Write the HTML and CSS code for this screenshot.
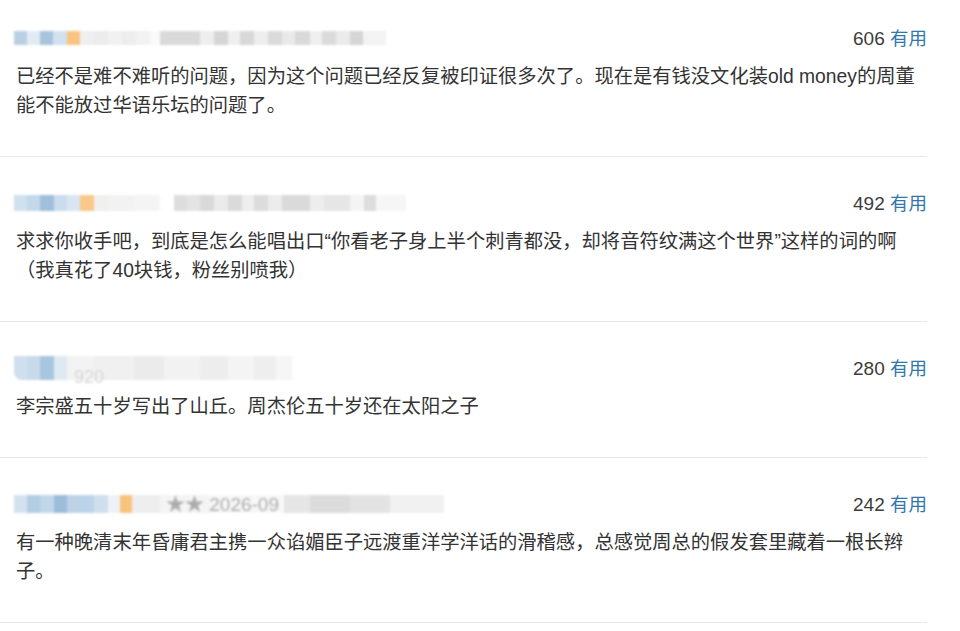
FILE: index.html
```html
<!DOCTYPE html>
<html lang="zh-CN">
<head>
<meta charset="utf-8">
<title>短评</title>
<link rel="stylesheet" href="styles.css">
</head>
<body>
<div class="comments">
  <div class="comment">
    <div class="comment-head">
      <div class="user user-1"></div>
      <div class="votes"><span class="vote-count">606</span> <span class="vote-label">有用</span></div>
    </div>
    <p class="comment-body">已经不是难不难听的问题，因为这个问题已经反复被印证很多次了。现在是有钱没文化装old money的周董能不能放过华语乐坛的问题了。</p>
  </div>
  <div class="comment">
    <div class="comment-head">
      <div class="user user-2"></div>
      <div class="votes"><span class="vote-count">492</span> <span class="vote-label">有用</span></div>
    </div>
    <p class="comment-body">求求你收手吧，到底是怎么能唱出口“你看老子身上半个刺青都没，却将音符纹满这个世界”这样的词的啊（我真花了40块钱，粉丝别喷我）</p>
  </div>
  <div class="comment">
    <div class="comment-head">
      <div class="user user-3"><span class="user-text">920</span></div>
      <div class="votes"><span class="vote-count">280</span> <span class="vote-label">有用</span></div>
    </div>
    <p class="comment-body">李宗盛五十岁写出了山丘。周杰伦五十岁还在太阳之子</p>
  </div>
  <div class="comment">
    <div class="comment-head">
      <div class="user user-4"><span class="user-text">★★ 2026-09</span></div>
      <div class="votes"><span class="vote-count">242</span> <span class="vote-label">有用</span></div>
    </div>
    <p class="comment-body">有一种晚清末年昏庸君主携一众谄媚臣子远渡重洋学洋话的滑稽感，总感觉周总的假发套里藏着一根长辫子。</p>
  </div>
</div>
</body>
</html>
```

FILE: styles.css
```css
html, body {
  margin: 0;
  padding: 0;
  background: #ffffff;
}

body {
  font-family: "Liberation Sans", "Noto Sans CJK SC", sans-serif;
  color: #333333;
  overflow: hidden;
}

.comments {
  width: 927px;
}

.comment {
  padding: 35px 0 36px 16px;
  border-bottom: 1px solid #e8e8e8;
}

.comment:first-child {
  padding-top: 27px;
}

.comment-head {
  height: 22px;
  display: flex;
  align-items: center;
  justify-content: space-between;
}

.votes {
  font-size: 19px;
  line-height: 22px;
  white-space: nowrap;
}

.vote-count {
  color: #3c3c3c;
}

.vote-label {
  color: #3377aa;
  font-family: "Noto Sans CJK SC", sans-serif;
  font-size: 18.5px;
}

.comment-body {
  margin: 13px 0 0;
  font-family: "Liberation Sans", "Noto Sans CJK SC", sans-serif;
  font-size: 19.3px;
  line-height: 29px;
  color: #333333;
}

/* blurred (pixelated) user info */
.user {
  position: relative;
  margin-left: -2px;
  height: 14px;
  filter: blur(1.2px);
  display: flex;
  align-items: center;
}

.user-text {
  position: absolute;
  font-size: 18px;
  line-height: 18px;
  color: #b8b8b8;
}

.user-1 {
  width: 372px;
  background: linear-gradient(to right,
    #b9d0e4 0 13px, #e2ebf3 13px 26px, #a8c4dc 26px 39px, #d3e1ee 39px 53px,
    #f9c47f 53px 66px, #efefef 66px 80px, #ececec 80px 94px, #f1f1f1 94px 108px,
    #ededed 108px 122px, #f2f2f2 122px 136px, #fafafa 136px 146px,
    #d9d9d9 146px 186px, #eeeeee 186px 200px, #d6d6d6 200px 214px,
    #efefef 214px 226px, #d8d8d8 226px 240px, #eeeeee 240px 254px,
    #dadada 254px 268px, #e9e9e9 268px 281px, #d9d9d9 281px 296px,
    #efefef 296px 308px, #dbdbdb 308px 322px, #ebebeb 322px 336px,
    #d6d6d6 336px 349px, #f3f3f3 349px 372px);
}

.user-2 {
  width: 392px;
  height: 16px;
  background: linear-gradient(to right,
    #cfe0ee 0 13px, #c3d8ea 13px 26px, #9fbfda 26px 40px, #cbdcec 40px 53px,
    #d9e6f1 53px 66px, #f9c98a 66px 80px, #f0f0ee 80px 94px, #f2f2f2 94px 120px,
    #f4f4f4 120px 146px, #ffffff 146px 160px,
    #dddddd 160px 173px, #e4e4e4 173px 186px, #d9d9d9 186px 200px,
    #ebebeb 200px 214px, #dadada 214px 228px, #eeeeee 228px 240px,
    #dcdcdc 240px 254px, #ececec 254px 268px, #dadada 268px 296px,
    #ededed 296px 310px, #e6e6e6 310px 336px, #f4f4f4 336px 350px,
    #dddddd 350px 362px, #f6f6f6 362px 392px);
}

.user-3 {
  width: 278px;
  height: 24px;
  border-radius: 0 0 0 8px;
  background: linear-gradient(to right,
    #cfdfee 0 13px, #c7daeb 13px 26px, #a9c6e0 26px 40px, #dfe9f3 40px 53px,
    #f3f3f3 53px 80px, #f0f0f0 80px 120px, #ebebeb 120px 150px,
    #f2f2f2 150px 186px, #ededed 186px 214px, #f4f4f4 214px 240px,
    #eeeeee 240px 262px, #f6f6f6 262px 278px);
}
.user-3 .user-text { left: 60px; top: 12px; color: #d6d6d6; }

.user-4 {
  width: 430px;
  height: 18px;
  background: linear-gradient(to right,
    #d3e2ef 0 13px, #b3cde3 13px 26px, #c1d6e8 26px 40px, #9dbcd8 40px 53px,
    #bcd3e7 53px 80px, #cfdfee 80px 94px, #eef2f6 94px 106px,
    #f9c27f 106px 118px, #eeeeee 118px 146px, #f4f4f4 146px 196px,
    #f7f7f7 196px 270px, #e6e6e6 270px 296px, #dcdcdc 296px 336px,
    #e3e3e3 336px 376px, #f1f1f1 376px 430px);
}
.user-4 .user-text { left: 152px; top: 1px; color: #adadad; font-size: 19px; }
```
